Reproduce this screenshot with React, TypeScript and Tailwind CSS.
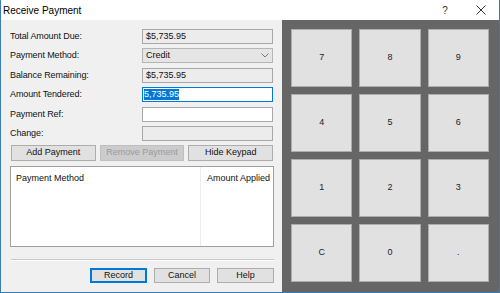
import React from "react";

const labelFont = { fontFamily: '"Liberation Sans", Arial, sans-serif' };

const Field: React.FC<{ label: string; className?: string; children: React.ReactNode }> = ({ label, className, children }) => (
    <div className={`flex items-center h-[15px] ${className ?? ""}`}>
        <div className="w-[132px] text-[9px] tracking-[-0.1px] text-[#111]">{label}</div>
        {children}
    </div>
);

const Box: React.FC<{ readOnly?: boolean; focus?: boolean; children?: React.ReactNode }> = ({ readOnly, focus, children }) => (
    <div
        className={`w-[131px] h-[15px] flex items-center px-[3px] text-[9px] text-[#111] border ${
            focus ? "border-[#0078d7] bg-white" : readOnly ? "border-[#a8a8a8] bg-[#ececec]" : "border-[#a8a8a8] bg-white"
        }`}
    >
        {children}
    </div>
);

const WinButton: React.FC<{ text: string; disabled?: boolean; primary?: boolean; className?: string }> = ({ text, disabled, primary, className }) => (
    <button
        className={`h-full flex items-center justify-center text-[9px] border ${
            disabled
                ? "bg-[#cccccc] border-[#bfbfbf] text-[#9a9a9a]"
                : primary
                ? "bg-[#e1e1e1] border-[#0078d7] border-2 text-[#111]"
                : "bg-[#e1e1e1] border-[#adadad] text-[#111]"
        } ${className ?? ""}`}
    >
        {text}
    </button>
);

const keys = ["7", "8", "9", "4", "5", "6", "1", "2", "3", "C", "0", "."];

export default function App() {
    return (
        <div className="w-[500px] h-[293px] flex flex-col bg-[#f0f0f0] border-x border-b border-[#3b7cb3] overflow-hidden" style={labelFont}>
            <div className="h-[20px] bg-white flex items-center pl-[2px] shrink-0">
                <span className="text-[10px] text-black flex-1">Receive Payment</span>
                <div className="w-[36px] flex justify-center text-[10px] text-[#333]">?</div>
                <div className="w-[36px] flex justify-center">
                    <svg width="10" height="10" viewBox="0 0 10 10">
                        <path d="M0.5 0.5 L9.5 9.5 M9.5 0.5 L0.5 9.5" stroke="#333" strokeWidth="1" />
                    </svg>
                </div>
            </div>

            <div className="flex flex-1 min-h-0">
                <div className="w-[281px] pl-[9px] pr-[8px] pt-[9px] flex flex-col shrink-0">
                    <Field label="Total Amount Due:">
                        <Box readOnly>$5,735.95</Box>
                    </Field>
                    <Field label="Payment Method:" className="mt-[4px]">
                        <div className="w-[131px] h-[15px] flex items-center justify-between px-[3px] text-[9px] text-[#111] border border-[#b5b5b5] bg-[#e5e5e5]">
                            <span>Credit</span>
                            <svg width="8" height="5" viewBox="0 0 8 5">
                                <path d="M0.5 0.5 L4 4 L7.5 0.5" stroke="#777" strokeWidth="1" fill="none" />
                            </svg>
                        </div>
                    </Field>
                    <Field label="Balance Remaining:" className="mt-[5px]">
                        <Box readOnly>$5,735.95</Box>
                    </Field>
                    <Field label="Amount Tendered:" className="mt-[4px]">
                        <Box focus>
                            <span className="bg-[#0078d7] text-white -ml-[2px] leading-[11px]">5,735.95</span>
                        </Box>
                    </Field>
                    <Field label="Payment Ref:" className="mt-[5px]">
                        <Box />
                    </Field>
                    <Field label="Change:" className="mt-[4px]">
                        <Box readOnly />
                    </Field>

                    <div className="flex gap-[4px] h-[16px] mt-[4px] pl-[1px] pr-[1px]">
                        <WinButton text="Add Payment" className="w-[85px]" />
                        <WinButton text="Remove Payment" disabled className="w-[85px]" />
                        <WinButton text="Hide Keypad" className="w-[85px]" />
                    </div>

                    <div className="h-[81px] mt-[5px] bg-white border border-[#a0a0a0] flex">
                        <div className="w-[190px] border-r border-[#ececec] pl-[5px] pt-[5px] text-[9px] text-[#111]">Payment Method</div>
                        <div className="flex-1 pl-[6px] pt-[5px] text-[9px] text-[#111]">Amount Applied</div>
                    </div>

                    <div className="mt-[12px] ml-[1px] border-t border-[#c8c8c8] border-b border-b-white h-[2px]" />

                    <div className="flex justify-end gap-[7px] h-[15px] mt-[7px]">
                        <WinButton text="Record" primary className="w-[57px]" />
                        <WinButton text="Cancel" className="w-[56px]" />
                        <WinButton text="Help" className="w-[57px]" />
                    </div>
                </div>

                <div className="flex-1 bg-[#666666] pl-[9px] pr-[10px] pt-[9px] pb-[10px]">
                    <div className="grid grid-cols-3 grid-rows-4 gap-[7px] h-full">
                        {keys.map((k) => (
                            <div
                                key={k}
                                className="bg-[#e1e1e1] border border-[#adadad] flex items-center justify-center text-[9px] text-[#222]"
                            >
                                {k}
                            </div>
                        ))}
                    </div>
                </div>
            </div>
        </div>
    );
}
